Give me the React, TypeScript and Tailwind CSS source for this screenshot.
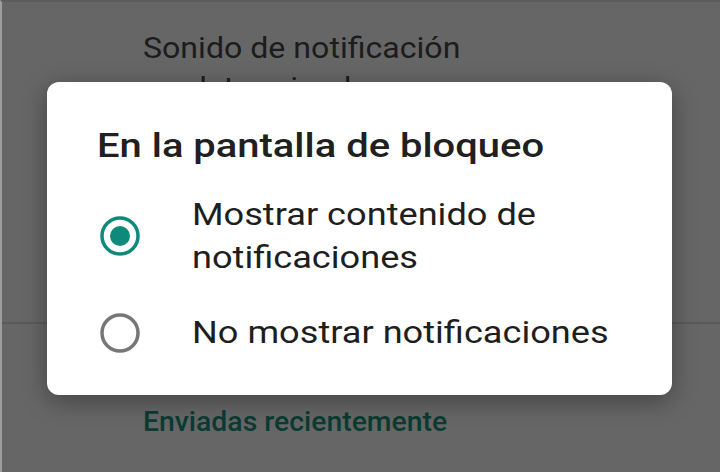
import React, { useState } from 'react';

const options = [
  { id: 'show', label: 'Mostrar contenido de notificaciones' },
  { id: 'hide', label: 'No mostrar notificaciones' },
];

const Radio = ({ checked }: { checked: boolean }) => (
  <svg width="42" height="42" viewBox="0 0 42 42" className="shrink-0">
    <circle
      cx="21"
      cy="21"
      r="18"
      fill="none"
      stroke={checked ? '#0e8a7b' : '#767676'}
      strokeWidth="3.5"
    />
    {checked && <circle cx="21" cy="21" r="10" fill="#0e8a7b" />}
  </svg>
);

const App = () => {
  const [selected, setSelected] = useState('show');

  return (
    <div
      className="relative h-[472px] w-[720px] overflow-hidden bg-[#666666] border-l-2 border-l-[#9e9e9e] border-t-2 border-t-[#5c5c5c]"
      style={{ fontFamily: 'Roboto, "Noto Sans", sans-serif' }}
    >
      {/* settings list behind the dim */}
      <div className="pl-[141px] pt-[26px] text-[30px] leading-[40px] text-[#1c1c1c]">
        <div className="origin-left scale-x-[1.07]">Sonido de notificación</div>
        <div className="origin-left scale-x-[1.07]">predeterminada</div>
      </div>
      <div className="mt-[214px] h-[2px] bg-[#5a5a5a]" />
      <div className="pl-[141px] pt-[78px] text-[27px] font-medium text-[#0b3b32]">
        <div className="origin-left scale-x-[1.05]">Enviadas recientemente</div>
      </div>

      {/* dialog */}
      <div className="absolute left-[45px] top-[80px] w-[625px] rounded-[12px] bg-white pb-[25px] shadow-[0_6px_24px_rgba(0,0,0,0.35)]">
        <h2 className="pl-[50px] pt-[42px] text-[33px] font-medium leading-[44px] text-[#202020]">
          <span className="inline-block origin-left scale-x-[1.21]">En la pantalla de bloqueo</span>
        </h2>
        <div className="mt-[9px] flex flex-col">
          {options.map((o) => (
            <button
              key={o.id}
              onClick={() => setSelected(o.id)}
              className="flex items-center py-[16px] pl-[52px] pr-[40px] text-left"
            >
              <Radio checked={selected === o.id} />
              <span className="ml-[51px] inline-block max-w-[380px] origin-left scale-x-[1.13] text-[32px] leading-[43px] text-[#1e1e1e]">
                {o.label}
              </span>
            </button>
          ))}
        </div>
      </div>
    </div>
  );
};

export default App;
